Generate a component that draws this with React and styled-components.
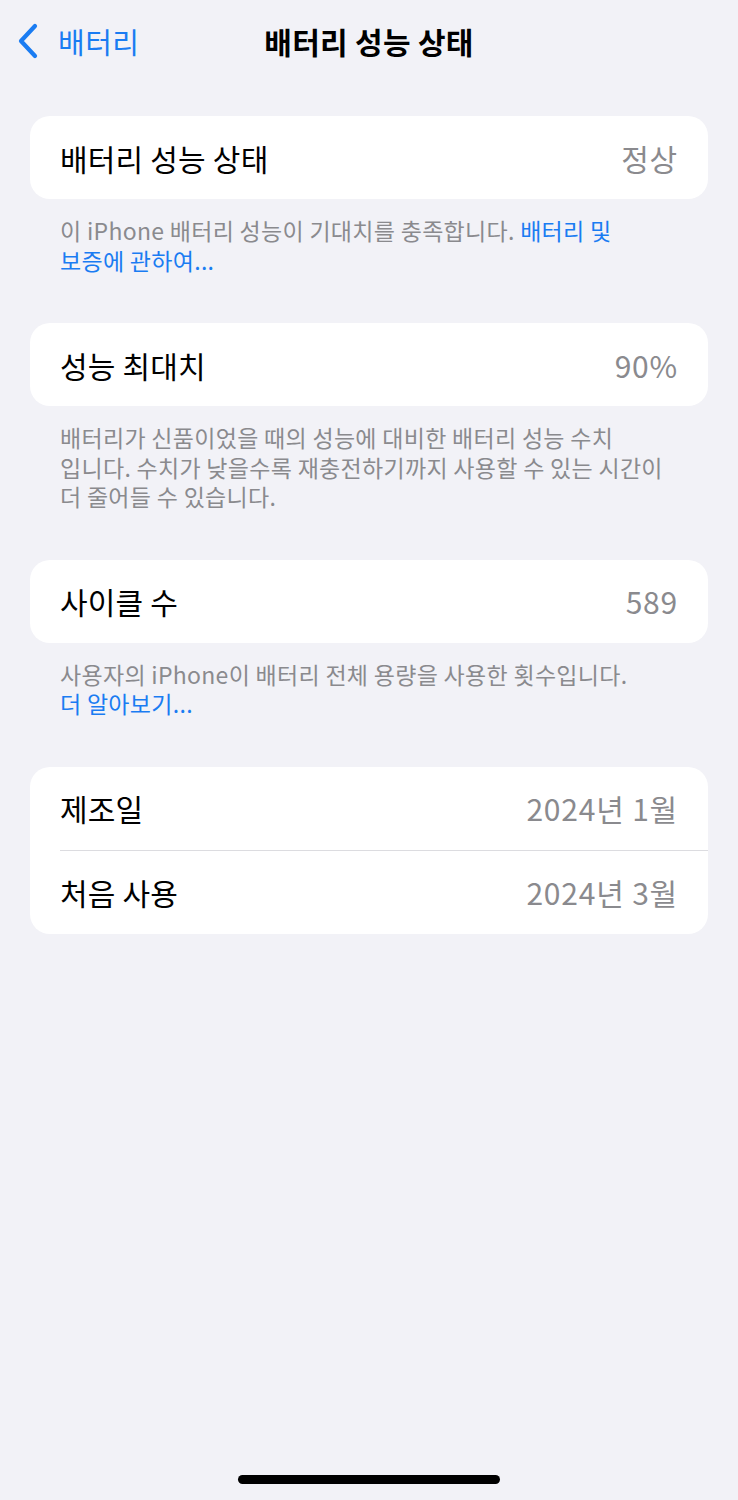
import React from 'react'
import styled, { createGlobalStyle } from 'styled-components'

const Global = createGlobalStyle`
  html, body {
    margin: 0;
    padding: 0;
    background: #f2f2f7;
  }
  body {
    font-family: "Noto Sans CJK KR", "Noto Sans", sans-serif;
    -webkit-font-smoothing: antialiased;
  }
`

const Screen = styled.div`
  background: #f2f2f7;
  height: 1500px;
  width: 738px;
  display: flex;
  flex-direction: column;
  box-sizing: border-box;
`

const NavBar = styled.div`
  height: 82px;
  display: grid;
  grid-template-columns: 1fr auto 1fr;
  align-items: center;
  padding: 0 16px;
  box-sizing: border-box;
`

const Back = styled.div`
  display: flex;
  align-items: center;
  gap: 18px;
  color: #1a7cf2;
  font-size: 29px;
  letter-spacing: 0.5px;
`

const Title = styled.div`
  font-size: 30px;
  font-weight: 700;
  color: #000;
  letter-spacing: 0.3px;
`

const Content = styled.div`
  padding: 34px 30px 0;
  display: flex;
  flex-direction: column;
`

const Card = styled.div`
  background: #fff;
  border-radius: 20px;
  overflow: hidden;
`

const Row = styled.div`
  height: 83px;
  display: flex;
  align-items: center;
  justify-content: space-between;
  padding: 0 30px;
  margin-left: ${p => (p.$divider ? '30px' : '0')};
  padding-left: ${p => (p.$divider ? '0' : '30px')};
  border-top: ${p => (p.$divider ? '1px solid #dcdce0' : 'none')};
`

const Label = styled.span`
  font-size: 30px;
  color: #000;
  letter-spacing: 0.2px;
`

const Value = styled.span`
  font-size: 30px;
  color: #8a8a8e;
  letter-spacing: 0.8px;
`

const Footer = styled.p`
  margin: 0;
  padding: 17px 30px 48px;
  font-size: 23px;
  line-height: 29.5px;
  color: #8a8a8e;
  letter-spacing: 0.3px;
`

const Link = styled.span`
  color: #1a7cf2;
`

const HomeBar = styled.div`
  margin: auto auto 16px;
  width: 262px;
  height: 9px;
  border-radius: 5px;
  background: #000;
`

function Chevron() {
  return (
    <svg width="24" height="36" viewBox="0 0 24 36">
      <polyline
        points="19,3 5,18 19,33"
        fill="none"
        stroke="#1a7cf2"
        strokeWidth="4.2"
        strokeLinecap="round"
        strokeLinejoin="round"
      />
    </svg>
  )
}

export default function App() {
  return (
    <Screen>
      <Global />
      <NavBar>
        <Back>
          <Chevron />
          배터리
        </Back>
        <Title>배터리 성능 상태</Title>
        <div />
      </NavBar>
      <Content>
        <Card>
          <Row>
            <Label>배터리 성능 상태</Label>
            <Value>정상</Value>
          </Row>
        </Card>
        <Footer>
          이 iPhone 배터리 성능이 기대치를 충족합니다. <Link>배터리 및<br />보증에 관하여...</Link>
        </Footer>

        <Card>
          <Row>
            <Label>성능 최대치</Label>
            <Value>90%</Value>
          </Row>
        </Card>
        <Footer>
          배터리가 신품이었을 때의 성능에 대비한 배터리 성능 수치<br />
          입니다. 수치가 낮을수록 재충전하기까지 사용할 수 있는 시간이<br />
          더 줄어들 수 있습니다.
        </Footer>

        <Card>
          <Row>
            <Label>사이클 수</Label>
            <Value>589</Value>
          </Row>
        </Card>
        <Footer>
          사용자의 iPhone이 배터리 전체 용량을 사용한 횟수입니다.<br />
          <Link>더 알아보기...</Link>
        </Footer>

        <Card>
          <Row>
            <Label>제조일</Label>
            <Value>2024년 1월</Value>
          </Row>
          <Row $divider>
            <Label>처음 사용</Label>
            <Value>2024년 3월</Value>
          </Row>
        </Card>
      </Content>
      <HomeBar />
    </Screen>
  )
}
